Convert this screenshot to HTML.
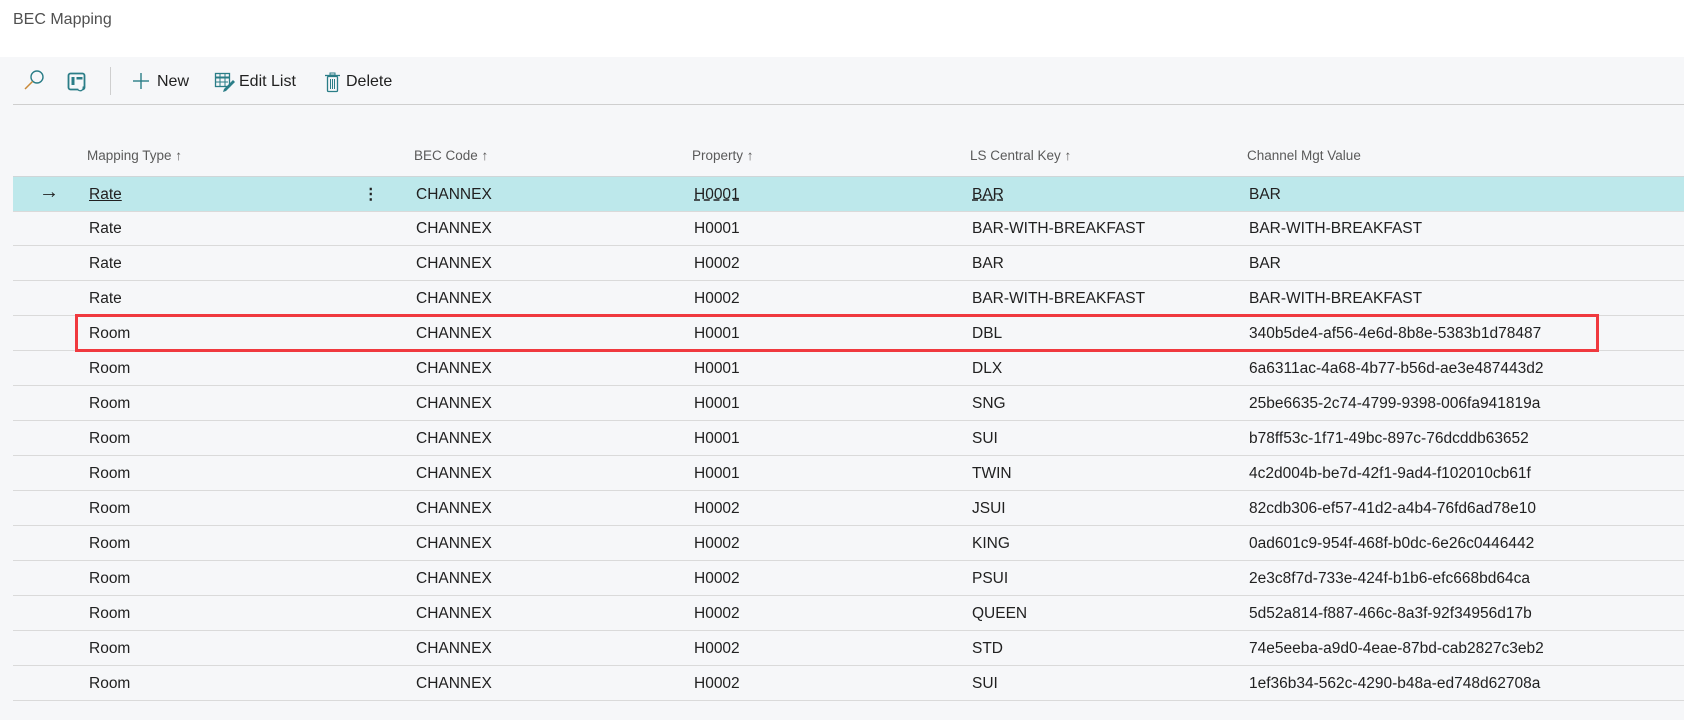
<!DOCTYPE html>
<html><head><meta charset="utf-8">
<style>
body{margin:0;width:1684px;height:720px;background:#f6f7f9;font-family:"Segoe UI","Liberation Sans",sans-serif;color:#212121;position:relative;overflow:hidden}
.top{position:absolute;left:0;top:0;width:1684px;height:57px;background:#fff}
.title{position:absolute;left:13px;top:11px;font-size:16px;color:#505050}
.tb{position:absolute;top:72px;font-size:16px;color:#212121;line-height:20px}
.tline{position:absolute;left:13px;right:0;top:104px;height:1px;background:#cfcfcf}
.hd{position:absolute;top:148px;font-size:13.5px;color:#5a5a5a}
.row{position:absolute;left:13px;right:0;height:34px;border-bottom:1px solid #dadada}
.row span{position:absolute;top:8px;font-size:15.5px;line-height:20px;white-space:nowrap}
.sel{background:#bde8eb;border-top:1px solid #cfd6d8}
.red{position:absolute;left:75px;top:314px;width:1518px;height:32px;border:3px solid #f0393f}
</style></head><body>
<div class="top"><div class="title">BEC Mapping</div></div>
<svg style="position:absolute;left:0;top:60px" width="400" height="40">
<circle cx="37" cy="17" r="6" fill="none" stroke="#2a7d87" stroke-width="1.4"/>
<line x1="32.5" y1="21.5" x2="25" y2="29" stroke="#c98a3a" stroke-width="1.5"/>
<rect x="68.5" y="13.5" width="16" height="16" rx="2" fill="none" stroke="#2a7d87" stroke-width="1.8"/>
<rect x="71.5" y="17" width="3" height="8" fill="#2a7d87"/><rect x="76.5" y="17" width="6" height="2.5" fill="#2a7d87"/>
<path d="M77.5 29 a3 3 0 0 0 5.5 -2.5" fill="#f6f7f9" stroke="#2a7d87" stroke-width="1.3"/>
<line x1="110.5" y1="7" x2="110.5" y2="35" stroke="#cfcfcf"/>
<line x1="133" y1="21" x2="149" y2="21" stroke="#2a7d87" stroke-width="1.4"/>
<line x1="141" y1="13" x2="141" y2="29" stroke="#2a7d87" stroke-width="1.4"/>
<rect x="215.5" y="13.5" width="14" height="13" fill="none" stroke="#2a7d87" stroke-width="1.3"/>
<line x1="215" y1="17.5" x2="230" y2="17.5" stroke="#2a7d87" stroke-width="2"/>
<line x1="215" y1="22" x2="228" y2="22" stroke="#2a7d87"/><line x1="220" y1="14" x2="220" y2="27" stroke="#2a7d87"/><line x1="225" y1="14" x2="225" y2="27" stroke="#2a7d87"/>
<path d="M224 29 L233 20 L235 22 L226 31 L223 32 Z" fill="#2a7d87"/>
<rect x="327.5" y="16.5" width="10" height="15" rx="1" fill="none" stroke="#2a7d87" stroke-width="1.3"/>
<line x1="325" y1="15.5" x2="340" y2="15.5" stroke="#2a7d87" stroke-width="1.3"/>
<rect x="330" y="13" width="5" height="2" fill="none" stroke="#2a7d87"/>
<line x1="330.5" y1="19" x2="330.5" y2="29" stroke="#2a7d87"/><line x1="332.5" y1="19" x2="332.5" y2="29" stroke="#2a7d87"/><line x1="334.5" y1="19" x2="334.5" y2="29" stroke="#2a7d87"/>
</svg>
<div class="tb" style="left:157px">New</div>
<div class="tb" style="left:239px">Edit List</div>
<div class="tb" style="left:346px">Delete</div>
<div class="tline"></div>
<div class="hd" style="left:87px">Mapping Type ↑</div>
<div class="hd" style="left:414px">BEC Code ↑</div>
<div class="hd" style="left:692px">Property ↑</div>
<div class="hd" style="left:970px">LS Central Key ↑</div>
<div class="hd" style="left:1247px">Channel Mgt Value</div>

<div class="row sel" style="top:176px;height:34px"><span style="left:26px;font-size:20px;top:5px">→</span><span style="left:76px;text-decoration:underline">Rate</span><span style="left:350px;font-weight:bold">⋮</span><span style="left:403px">CHANNEX</span><span style="left:681px;text-decoration:underline dashed">H0001</span><span style="left:959px;text-decoration:underline dashed">BAR</span><span style="left:1236px">BAR</span></div>
<div class="row" style="top:211px"><span style="left:76px">Rate</span><span style="left:403px">CHANNEX</span><span style="left:681px">H0001</span><span style="left:959px">BAR-WITH-BREAKFAST</span><span style="left:1236px">BAR-WITH-BREAKFAST</span></div>
<div class="row" style="top:246px"><span style="left:76px">Rate</span><span style="left:403px">CHANNEX</span><span style="left:681px">H0002</span><span style="left:959px">BAR</span><span style="left:1236px">BAR</span></div>
<div class="row" style="top:281px"><span style="left:76px">Rate</span><span style="left:403px">CHANNEX</span><span style="left:681px">H0002</span><span style="left:959px">BAR-WITH-BREAKFAST</span><span style="left:1236px">BAR-WITH-BREAKFAST</span></div>
<div class="row" style="top:316px"><span style="left:76px">Room</span><span style="left:403px">CHANNEX</span><span style="left:681px">H0001</span><span style="left:959px">DBL</span><span style="left:1236px">340b5de4-af56-4e6d-8b8e-5383b1d78487</span></div>
<div class="row" style="top:351px"><span style="left:76px">Room</span><span style="left:403px">CHANNEX</span><span style="left:681px">H0001</span><span style="left:959px">DLX</span><span style="left:1236px">6a6311ac-4a68-4b77-b56d-ae3e487443d2</span></div>
<div class="row" style="top:386px"><span style="left:76px">Room</span><span style="left:403px">CHANNEX</span><span style="left:681px">H0001</span><span style="left:959px">SNG</span><span style="left:1236px">25be6635-2c74-4799-9398-006fa941819a</span></div>
<div class="row" style="top:421px"><span style="left:76px">Room</span><span style="left:403px">CHANNEX</span><span style="left:681px">H0001</span><span style="left:959px">SUI</span><span style="left:1236px">b78ff53c-1f71-49bc-897c-76dcddb63652</span></div>
<div class="row" style="top:456px"><span style="left:76px">Room</span><span style="left:403px">CHANNEX</span><span style="left:681px">H0001</span><span style="left:959px">TWIN</span><span style="left:1236px">4c2d004b-be7d-42f1-9ad4-f102010cb61f</span></div>
<div class="row" style="top:491px"><span style="left:76px">Room</span><span style="left:403px">CHANNEX</span><span style="left:681px">H0002</span><span style="left:959px">JSUI</span><span style="left:1236px">82cdb306-ef57-41d2-a4b4-76fd6ad78e10</span></div>
<div class="row" style="top:526px"><span style="left:76px">Room</span><span style="left:403px">CHANNEX</span><span style="left:681px">H0002</span><span style="left:959px">KING</span><span style="left:1236px">0ad601c9-954f-468f-b0dc-6e26c0446442</span></div>
<div class="row" style="top:561px"><span style="left:76px">Room</span><span style="left:403px">CHANNEX</span><span style="left:681px">H0002</span><span style="left:959px">PSUI</span><span style="left:1236px">2e3c8f7d-733e-424f-b1b6-efc668bd64ca</span></div>
<div class="row" style="top:596px"><span style="left:76px">Room</span><span style="left:403px">CHANNEX</span><span style="left:681px">H0002</span><span style="left:959px">QUEEN</span><span style="left:1236px">5d52a814-f887-466c-8a3f-92f34956d17b</span></div>
<div class="row" style="top:631px"><span style="left:76px">Room</span><span style="left:403px">CHANNEX</span><span style="left:681px">H0002</span><span style="left:959px">STD</span><span style="left:1236px">74e5eeba-a9d0-4eae-87bd-cab2827c3eb2</span></div>
<div class="row" style="top:666px"><span style="left:76px">Room</span><span style="left:403px">CHANNEX</span><span style="left:681px">H0002</span><span style="left:959px">SUI</span><span style="left:1236px">1ef36b34-562c-4290-b48a-ed748d62708a</span></div>
<div class="red"></div>
</body></html>
